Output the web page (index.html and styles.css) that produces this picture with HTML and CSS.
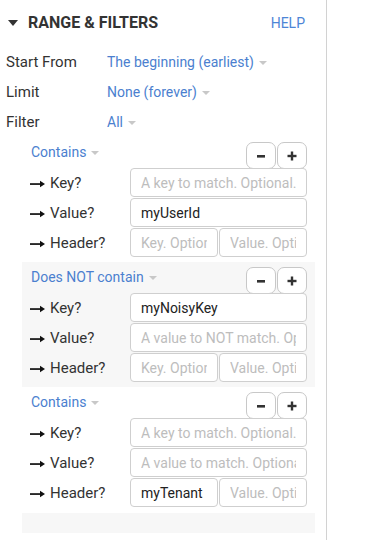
FILE: index.html
```html
<!DOCTYPE html>
<html lang="en">
<head>
    <meta charset="UTF-8">
    <title>Range &amp; Filters</title>
    <link rel="stylesheet" href="styles.css">
</head>
<body>
<div class="panel">
    <div class="section-head">
        <span class="toggle"></span>
        <h2>RANGE &amp; FILTERS</h2>
        <a class="help" href="#">HELP</a>
    </div>

    <div class="field">
        <span class="field-label">Start From</span>
        <span class="picker">The beginning (earliest)</span>
    </div>
    <div class="field">
        <span class="field-label">Limit</span>
        <span class="picker">None (forever)</span>
    </div>
    <div class="field">
        <span class="field-label">Filter</span>
        <span class="picker">All</span>
    </div>

    <div class="filters">
        <div class="filter">
            <div class="filter-top">
                <span class="picker">Contains</span>
                <div class="buttons">
                    <button class="btn"><svg width="10" height="10" viewBox="0 0 10 10"><rect x="1" y="4" width="8" height="2.6" fill="#333"/></svg></button>
                    <button class="btn"><svg width="10" height="10" viewBox="0 0 10 10"><rect x="0.5" y="3.8" width="9" height="2.4" fill="#333"/><rect x="3.8" y="0.5" width="2.4" height="9" fill="#333"/></svg></button>
                </div>
            </div>
            <div class="match">
                <span class="match-label"><svg class="arrow" width="15" height="8" viewBox="0 0 15 8"><rect x="0" y="3.2" width="11" height="1.7" fill="#111"/><path d="M10 0.8 L15 4 L10 7.2 Z" fill="#111"/></svg>Key?</span>
                <input class="box" placeholder="A key to match. Optional.">
            </div>
            <div class="match">
                <span class="match-label"><svg class="arrow" width="15" height="8" viewBox="0 0 15 8"><rect x="0" y="3.2" width="11" height="1.7" fill="#111"/><path d="M10 0.8 L15 4 L10 7.2 Z" fill="#111"/></svg>Value?</span>
                <input class="box" value="myUserId" placeholder="A value to match. Optional.">
            </div>
            <div class="match">
                <span class="match-label"><svg class="arrow" width="15" height="8" viewBox="0 0 15 8"><rect x="0" y="3.2" width="11" height="1.7" fill="#111"/><path d="M10 0.8 L15 4 L10 7.2 Z" fill="#111"/></svg>Header?</span>
                <div class="pair">
                    <input class="box" placeholder="Key. Optional.">
                    <input class="box" placeholder="Value. Optional.">
                </div>
            </div>
        </div>

        <div class="filter alt">
            <div class="filter-top">
                <span class="picker">Does NOT contain</span>
                <div class="buttons">
                    <button class="btn"><svg width="10" height="10" viewBox="0 0 10 10"><rect x="1" y="4" width="8" height="2.6" fill="#333"/></svg></button>
                    <button class="btn"><svg width="10" height="10" viewBox="0 0 10 10"><rect x="0.5" y="3.8" width="9" height="2.4" fill="#333"/><rect x="3.8" y="0.5" width="2.4" height="9" fill="#333"/></svg></button>
                </div>
            </div>
            <div class="match">
                <span class="match-label"><svg class="arrow" width="15" height="8" viewBox="0 0 15 8"><rect x="0" y="3.2" width="11" height="1.7" fill="#111"/><path d="M10 0.8 L15 4 L10 7.2 Z" fill="#111"/></svg>Key?</span>
                <input class="box" value="myNoisyKey" placeholder="A key to NOT match. Optional.">
            </div>
            <div class="match">
                <span class="match-label"><svg class="arrow" width="15" height="8" viewBox="0 0 15 8"><rect x="0" y="3.2" width="11" height="1.7" fill="#111"/><path d="M10 0.8 L15 4 L10 7.2 Z" fill="#111"/></svg>Value?</span>
                <input class="box" placeholder="A value to NOT match. Optional.">
            </div>
            <div class="match">
                <span class="match-label"><svg class="arrow" width="15" height="8" viewBox="0 0 15 8"><rect x="0" y="3.2" width="11" height="1.7" fill="#111"/><path d="M10 0.8 L15 4 L10 7.2 Z" fill="#111"/></svg>Header?</span>
                <div class="pair">
                    <input class="box" placeholder="Key. Optional.">
                    <input class="box" placeholder="Value. Optional.">
                </div>
            </div>
        </div>

        <div class="filter">
            <div class="filter-top">
                <span class="picker">Contains</span>
                <div class="buttons">
                    <button class="btn"><svg width="10" height="10" viewBox="0 0 10 10"><rect x="1" y="4" width="8" height="2.6" fill="#333"/></svg></button>
                    <button class="btn"><svg width="10" height="10" viewBox="0 0 10 10"><rect x="0.5" y="3.8" width="9" height="2.4" fill="#333"/><rect x="3.8" y="0.5" width="2.4" height="9" fill="#333"/></svg></button>
                </div>
            </div>
            <div class="match">
                <span class="match-label"><svg class="arrow" width="15" height="8" viewBox="0 0 15 8"><rect x="0" y="3.2" width="11" height="1.7" fill="#111"/><path d="M10 0.8 L15 4 L10 7.2 Z" fill="#111"/></svg>Key?</span>
                <input class="box" placeholder="A key to match. Optional.">
            </div>
            <div class="match">
                <span class="match-label"><svg class="arrow" width="15" height="8" viewBox="0 0 15 8"><rect x="0" y="3.2" width="11" height="1.7" fill="#111"/><path d="M10 0.8 L15 4 L10 7.2 Z" fill="#111"/></svg>Value?</span>
                <input class="box" placeholder="A value to match. Optional.">
            </div>
            <div class="match">
                <span class="match-label"><svg class="arrow" width="15" height="8" viewBox="0 0 15 8"><rect x="0" y="3.2" width="11" height="1.7" fill="#111"/><path d="M10 0.8 L15 4 L10 7.2 Z" fill="#111"/></svg>Header?</span>
                <div class="pair">
                    <input class="box" value="myTenant" placeholder="Key. Optional.">
                    <input class="box" placeholder="Value. Optional.">
                </div>
            </div>
        </div>

        <div class="filter-foot"></div>
    </div>
</div>
</body>
</html>
```

FILE: styles.css
```css
html, body {
    margin: 0;
    padding: 0;
    height: 100%;
    background: white;
    font-family: Roboto, "Helvetica Neue", Arial, sans-serif;
    color: #333;
}

div.panel {
    box-sizing: border-box;
    width: 327px;
    height: 100%;
    padding: 12px 11px 0 6px;
    border-right: 1px solid #d2d2d2;
}

div.section-head {
    display: flex;
    align-items: center;
    height: 20px;
    margin: 0 0 15px 0;
}

span.toggle {
    width: 0;
    height: 0;
    margin: 1px 10px 0 2px;
    border-left: 5px solid transparent;
    border-right: 5px solid transparent;
    border-top: 6px solid #333;
}

h2 {
    flex: 1;
    margin: 2px 0 0 0;
    font-size: 16px;
    font-weight: bold;
    line-height: 20px;
    color: #333;
}

a.help {
    margin: 2px 10px 0 0;
    font-size: 14px;
    color: #4d85d6;
    text-decoration: none;
}

div.field {
    display: flex;
    align-items: center;
    height: 30px;
}

span.field-label {
    width: 101px;
    font-size: 15px;
    line-height: 30px;
}

span.picker {
    display: flex;
    align-items: center;
    font-size: 14px;
    line-height: 20px;
    color: #4b7fcf;
    cursor: pointer;
}

span.picker::after {
    content: "";
    width: 0;
    height: 0;
    margin: 1px 0 0 5px;
    border-left: 4px solid transparent;
    border-right: 4px solid transparent;
    border-top: 4px solid #c8c8c8;
}

div.filters {
    margin: 0 0 0 16px;
}

div.filter {
    padding: 4px 8px;
}

div.filter.alt {
    background: #f7f7f7;
}

div.filter-top {
    display: flex;
    justify-content: space-between;
    align-items: flex-start;
    height: 27px;
}

div.filter-top span.picker {
    margin: 1px 0 0 1px;
}

div.buttons {
    display: flex;
    gap: 1px;
    margin: 1px 0 0 0;
}

button.btn {
    display: flex;
    align-items: center;
    justify-content: center;
    width: 30px;
    height: 27px;
    padding: 0;
    border: 1px solid #c8c8c8;
    border-radius: 7px;
    background: white;
    cursor: pointer;
}

div.match {
    display: flex;
    align-items: center;
    height: 30px;
}

span.match-label {
    display: flex;
    align-items: center;
    width: 100px;
    flex: none;
    font-size: 15px;
    color: #333;
}

svg.arrow {
    margin: 1px 5px 0 0;
}

input.box {
    box-sizing: border-box;
    width: 100%;
    min-width: 0;
    height: 29px;
    margin: 0 0 1px 0;
    padding: 0 10px;
    border: 1px solid #cfcfcf;
    border-radius: 4px;
    background: white;
    font-family: Roboto, "Helvetica Neue", Arial, sans-serif;
    font-size: 14px;
    color: #222;
    outline: none;
}

input.box::placeholder {
    color: #bdbdbd;
}

div.pair {
    display: flex;
    gap: 1px;
    width: 100%;
    min-width: 0;
}

div.filter-foot {
    height: 20px;
    margin: 1px 0 0 0;
    background: #f7f7f7;
}
```
